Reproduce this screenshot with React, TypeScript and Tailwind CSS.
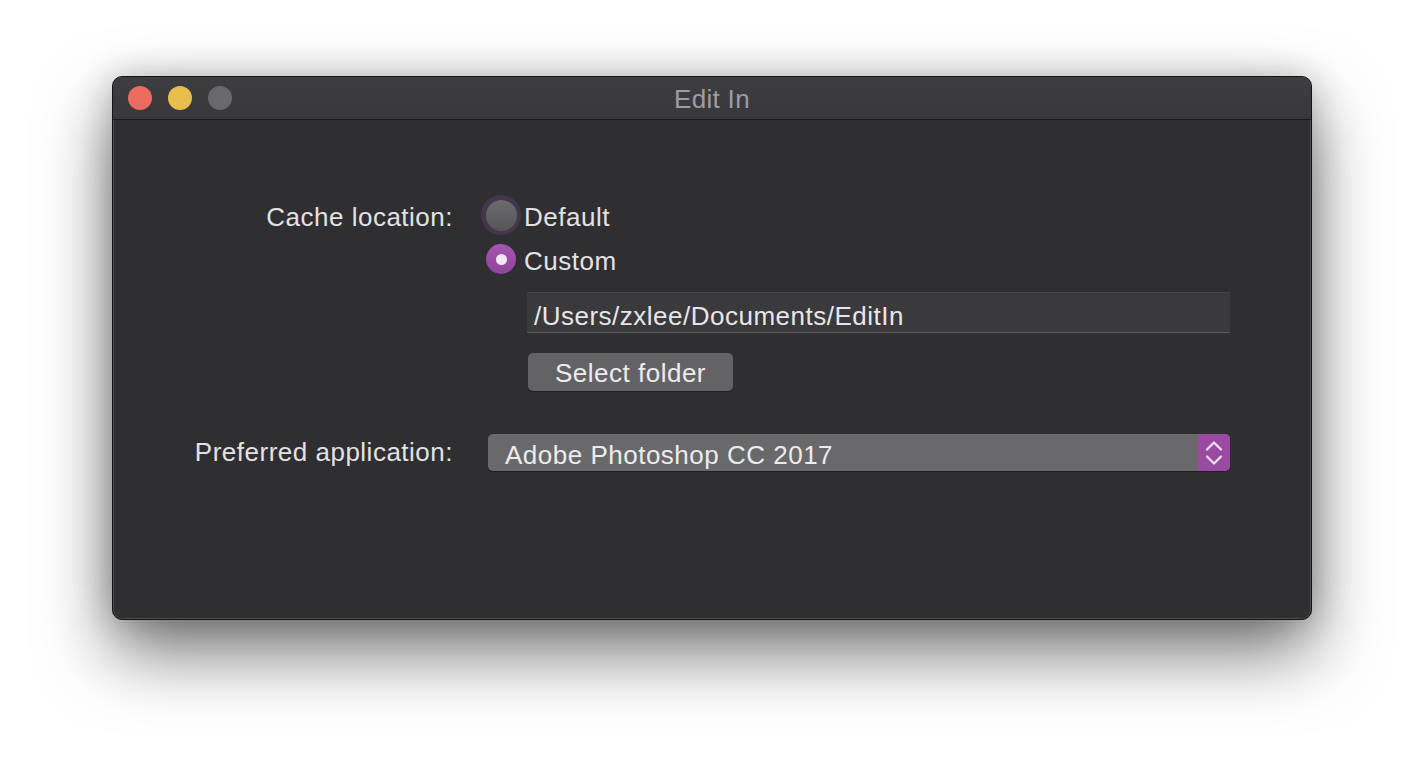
import React from 'react'

const font = { fontFamily: '"Liberation Sans", Arial, sans-serif' }

function Radio({ checked, focused, label }: { checked?: boolean; focused?: boolean; label: string }) {
  return (
    <div className="flex h-[44px] items-center">
      <div
        className={
          'flex h-[40px] w-[40px] items-center justify-center rounded-full ' +
          (focused ? 'bg-[#43374a]' : '')
        }
      >
        {checked ? (
          <div className="flex h-[30px] w-[30px] items-center justify-center rounded-full bg-gradient-to-b from-[#a457b0] to-[#8f4399]">
            <div className="h-[11px] w-[11px] rounded-full bg-[#f3e4f6]" />
          </div>
        ) : (
          <div className="h-[31px] w-[31px] rounded-full bg-gradient-to-b from-[#6c6c6e] to-[#555557]" />
        )}
      </div>
      <span className="ml-[3px] pt-[5px] text-[26px] tracking-[0.5px] text-[#e2e2e4]">{label}</span>
    </div>
  )
}

export default function App() {
  return (
    <div className="h-[768px] w-[1424px] overflow-hidden bg-white" style={font}>
      <div className="ml-[112px] mt-[76px] flex h-[544px] w-[1200px] flex-col overflow-hidden rounded-[10px] border border-[#151516] bg-[#2f2f31] shadow-[0_32px_70px_rgba(0,0,0,0.55),0_0_34px_rgba(0,0,0,0.2),inset_0_0_0_1px_rgba(255,255,255,0.14)]">
        {/* Barra de título */}
        <div className="relative flex h-[43px] shrink-0 items-center border-b border-[#1a1a1b] bg-gradient-to-b from-[#3e3e40] to-[#38383a] px-[15px]">
          <div className="flex gap-[16px]">
            <div className="h-[24px] w-[24px] rounded-full bg-[#ec6a5e]" />
            <div className="h-[24px] w-[24px] rounded-full bg-[#e5bf4a]" />
            <div className="h-[24px] w-[24px] rounded-full bg-[#69696b]" />
          </div>
          <div className="absolute inset-0 flex items-center justify-center pt-[2px] text-[26px] tracking-[0.3px] text-[#9d9d9f]">
            Edit In
          </div>
        </div>

        {/* Contenido */}
        <div className="grid grid-cols-[340px_1fr] gap-x-[28px] pt-[73px]">
          <div className="flex h-[44px] items-center justify-end pt-[5px] text-[26px] tracking-[0.5px] text-[#e2e2e4]">
            Cache location:
          </div>
          <div className="flex flex-col">
            <Radio focused label="Default" />
            <Radio checked label="Custom" />
            <div className="ml-[46px] mt-[11px] flex h-[41px] w-[703px] items-center border-t border-b border-[#444446] border-b-[#59595b] bg-[#3a3a3c] px-[7px] pt-[7px] text-[26px] tracking-[0.5px] text-[#e6e6e8]">
              /Users/zxlee/Documents/EditIn
            </div>
            <div className="ml-[47px] mt-[20px] flex h-[38px] w-[205px] items-center justify-center rounded-[5px] bg-[#636366] pt-[3px] text-[26px] tracking-[0.5px] text-[#ececee] shadow-[0_1px_1px_rgba(0,0,0,0.35)]">
              Select folder
            </div>
          </div>

          <div className="mt-[43px] flex h-[37px] items-center justify-end text-[26px] tracking-[0.5px] text-[#e2e2e4]">
            Preferred application:
          </div>
          <div className="mt-[43px] ml-[7px] flex h-[37px] w-[742px] overflow-hidden rounded-[5px] bg-[#69696b] shadow-[0_1px_1px_rgba(0,0,0,0.35)]">
            <div className="flex flex-1 items-center pl-[17px] pt-[5px] text-[26px] tracking-[0.5px] text-[#ececee]">
              Adobe Photoshop CC 2017
            </div>
            <div className="flex w-[32px] items-center justify-center bg-[#9a4aa3]">
              <svg width="18" height="28" viewBox="0 0 18 28" fill="none" stroke="#f5e2f8" strokeWidth="2.2" strokeLinecap="round" strokeLinejoin="round">
                <path d="M2 10.5 L9 3.5 L16 10.5" />
                <path d="M2 17.5 L9 24.5 L16 17.5" />
              </svg>
            </div>
          </div>
        </div>
      </div>
    </div>
  )
}
